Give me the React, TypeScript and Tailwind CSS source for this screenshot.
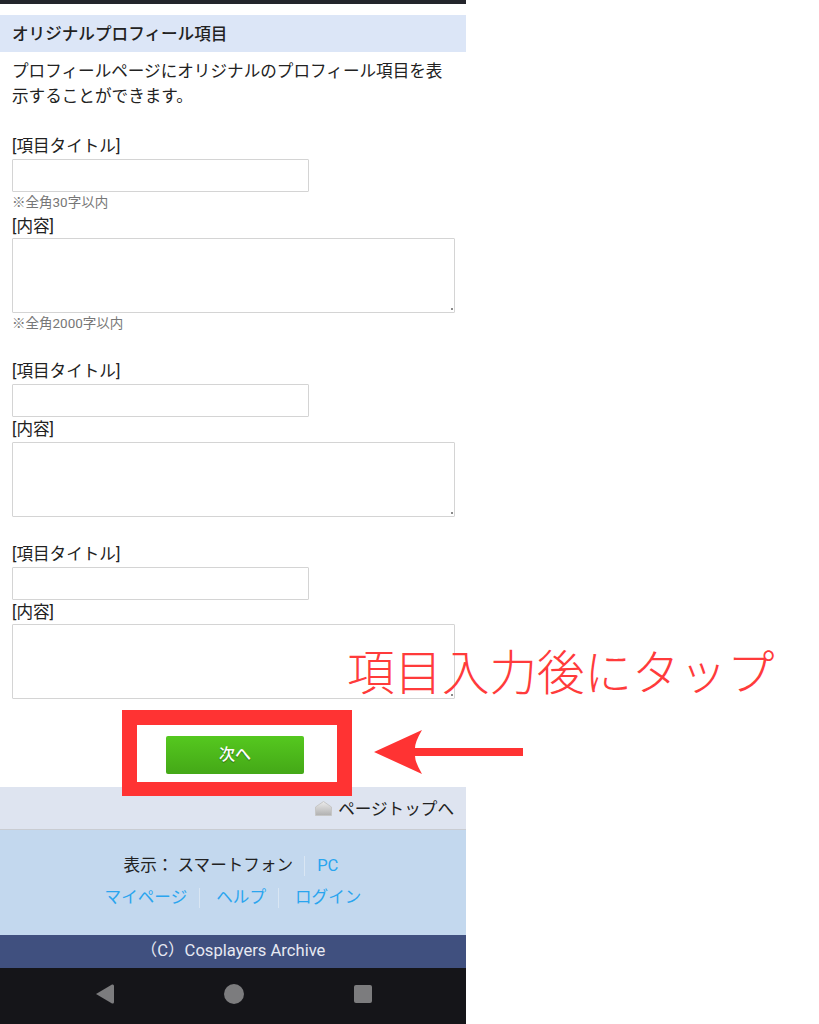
const fontStack = "font-['Roboto','Noto_Sans_CJK_JP',sans-serif]";

const ContentBox = () => {
  return (
    <div className="relative mt-[1px] w-[443px] h-[75px]">
      <textarea className="block w-full h-full resize-none bg-white border border-[#d4d4d4] rounded-[1px]" />
      <span className="absolute right-[2px] bottom-[3px] w-[2px] h-[2px] bg-[#8a8a8a]" />
    </div>
  );
};

const ItemFields = ({
  note,
  tight,
  className,
}: {
  note?: boolean;
  tight?: boolean;
  className: string;
}) => {
  return (
    <div className={className}>
      <p className="h-[24px] leading-[28px]">[項目タイトル]</p>
      <input
        type="text"
        className="block mt-[2px] w-[297px] h-[33px] bg-white border border-[#d4d4d4] rounded-[1px]"
      />
      {note && (
        <p className="h-[19px] leading-[21px] text-[13.5px] text-[#777]">※全角30字以内</p>
      )}
      <p
        className={`${tight ? "h-[23px]" : "h-[24px]"} ${
          note ? "mt-[2px] leading-[28px]" : "leading-[26px]"
        }`}
      >
        [内容]
      </p>
      <ContentBox />
      {note && (
        <p className="mt-[1px] h-[19px] leading-[19px] text-[13.5px] text-[#777]">※全角2000字以内</p>
      )}
    </div>
  );
};

export default function App() {
  return (
    <div className={`relative w-[819px] h-[1024px] bg-white overflow-hidden ${fontStack}`}>
      <div className="w-[466px] h-full flex flex-col text-[16.6px] text-[#222]">
        <div className="h-[4px] bg-[#23252b]" />
        <h2 className="mt-[11px] h-[37px] pl-[12px] leading-[39px] bg-[#dce6f7] font-medium">
          オリジナルプロフィール項目
        </h2>
        <p className="mt-[7px] px-[12px] leading-[25px]">
          プロフィールページにオリジナルのプロフィール項目を表示することができます。
        </p>

        <div className="pl-[12px]">
          <ItemFields note className="mt-[24px]" />
          <ItemFields className="mt-[25px]" />
          <ItemFields tight className="mt-[24px]" />
        </div>

        <div className="mt-[37px] flex justify-center pl-[4px]">
          <button className="w-[138px] h-[38px] rounded-[2px] bg-gradient-to-b from-[#55c81f] to-[#44a817] text-white text-[16px] font-medium [text-shadow:0_1px_1px_rgba(0,0,0,0.4)]">
            次へ
          </button>
        </div>

        <div className="mt-[13px] h-[43px] flex items-center justify-end pr-[12px] bg-[#dee4f0] border-b border-[#c9ccd2]">
          <svg width="17" height="15" viewBox="0 0 17 15" className="mr-[6px]">
            <defs>
              <linearGradient id="houseFill" x1="0" y1="0" x2="0" y2="1">
                <stop offset="0" stopColor="#ececec" />
                <stop offset="1" stopColor="#b0b0b0" />
              </linearGradient>
            </defs>
            <path d="M8.5 0.5 L16.5 6 V14.5 H0.5 V6 Z" fill="url(#houseFill)" stroke="#c6c6c6" />
          </svg>
          <span className="mt-[4px]">ページトップへ</span>
        </div>

        <div className="h-[105px] bg-[#c3d8ee] flex flex-col items-center pt-[22px]">
          <div className="flex items-center h-[28px] leading-[28px] pr-[4px]">
            <span>表示： スマートフォン</span>
            <span className="ml-[11px] mr-[12px] w-[1px] h-[20px] bg-[#d9e6f3]" />
            <span className="text-[#2aa5ee]">PC</span>
          </div>
          <div className="mt-[4px] flex items-center h-[28px] leading-[28px] text-[#2aa5ee]">
            <span>マイページ</span>
            <span className="ml-[12px] mr-[16px] w-[1px] h-[20px] bg-[#d9e6f3]" />
            <span>ヘルプ</span>
            <span className="ml-[12px] mr-[16px] w-[1px] h-[20px] bg-[#d9e6f3]" />
            <span>ログイン</span>
          </div>
        </div>

        <div className="h-[33px] leading-[31px] bg-[#40507f] text-center text-[#e6e9f2] text-[16.6px]">
          （C）Cosplayers Archive
        </div>

        <div className="flex-1 bg-[#151519] flex items-center justify-center gap-[110px] pl-[2px] pb-[4px]">
          <svg width="18" height="20" viewBox="0 0 18 20">
            <path d="M0 10 L16 0.5 Q18 0 18 2 V18 Q18 20 16 19.5 Z" fill="#7c7c7e" />
          </svg>
          <svg width="20" height="20" viewBox="0 0 20 20">
            <circle cx="10" cy="10" r="10" fill="#7c7c7e" />
          </svg>
          <svg width="18" height="18" viewBox="0 0 18 18">
            <rect width="18" height="18" rx="2" fill="#7c7c7e" />
          </svg>
        </div>
      </div>

      {/* annotations drawn over the screenshot */}
      <div className="absolute left-[122px] top-[710px] w-[230px] h-[86px] border-x-[15px] border-t-[15px] border-b-[14px] border-[#ff3333]" />
      <svg width="150" height="44" viewBox="0 0 150 44" className="absolute left-[373px] top-[730px]">
        <path d="M1 22 L49 0 Q42 12 42 18 H150 V26 H42 Q42 32 49 44 Z" fill="#ff3333" />
      </svg>
      <p className="absolute left-[347px] top-[644px] w-[440px] whitespace-nowrap leading-[60px] text-[47.5px] text-[#ff3b3b] font-['Liberation_Serif','Noto_Sans_CJK_JP',serif] font-light">
        項目入力後にタップ
      </p>
    </div>
  );
}
